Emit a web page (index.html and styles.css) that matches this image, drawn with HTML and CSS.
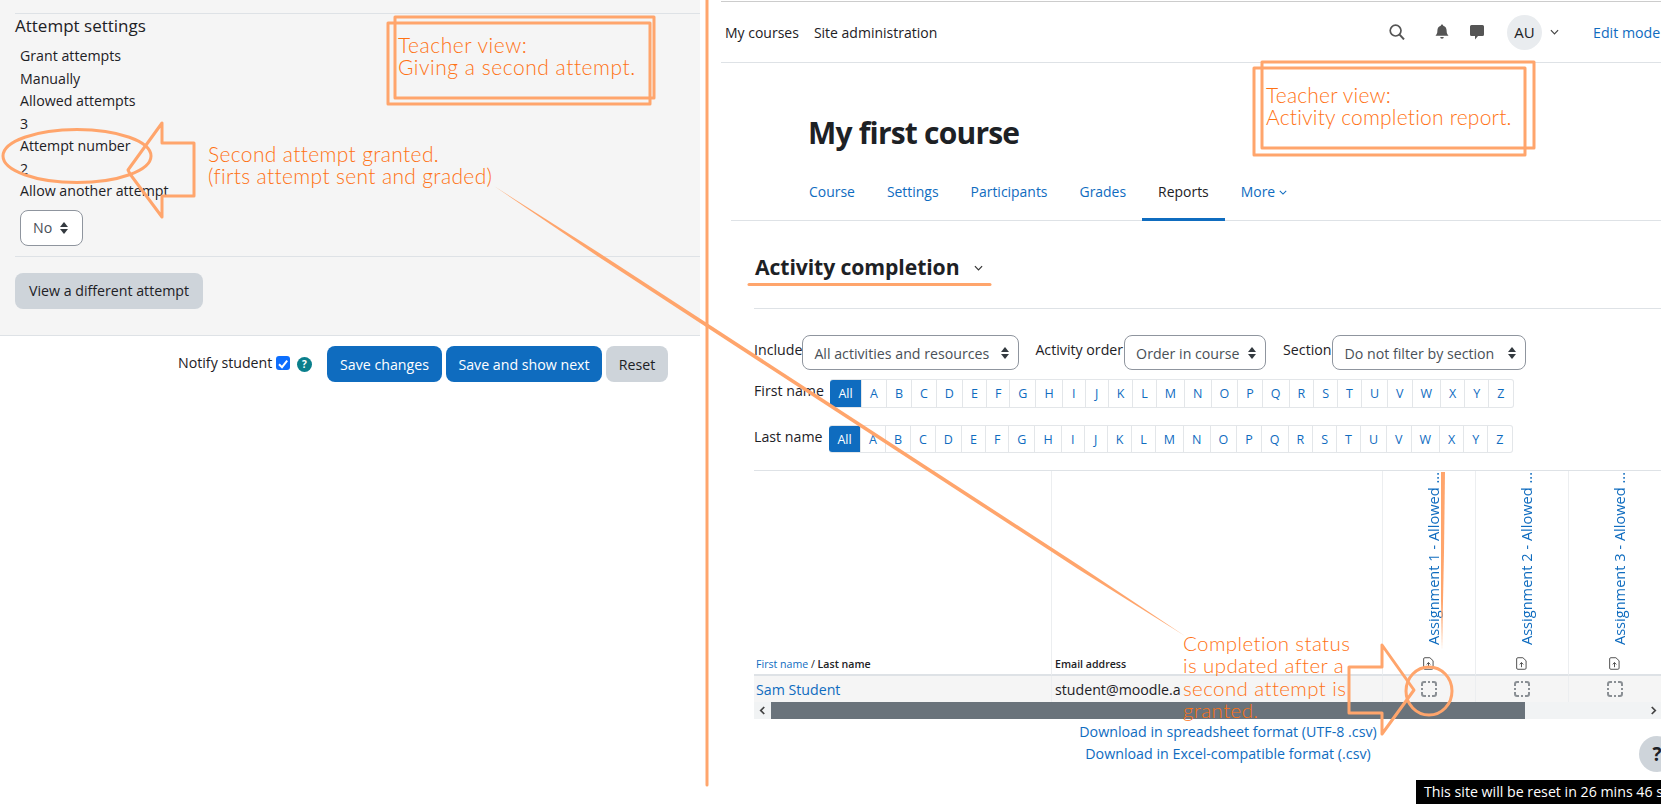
FILE: index.html
```html
<!DOCTYPE html>
<html lang="en">
<head>
<meta charset="utf-8">
<title>Attempt settings and activity completion</title>
<link rel="stylesheet" href="styles.css">
</head>
<body>
<main class="page">
  <section class="left">
    <div class="panel">
      <h3 class="panel-title">Attempt settings</h3>
      <dl class="facts">
        <dt>Grant attempts</dt><dd>Manually</dd>
        <dt>Allowed attempts</dt><dd>3</dd>
        <dt>Attempt number</dt><dd>2</dd>
        <dt>Allow another attempt</dt>
      </dl>
      <div class="select select-no">No<span class="caret"></span></div>
      <div class="panel-foot"><span class="btn btn-grey btn-view">View a different attempt</span></div>
    </div>
    <div class="actions">
      <span class="notify">Notify student</span>
      <span class="check"><svg viewBox="0 0 14 14" width="14" height="14"><path d="M3 7.2 6 10.2 11.2 3.6" fill="none" stroke="#fff" stroke-width="2"/></svg></span>
      <span class="help-dot">?</span>
      <span class="btn btn-blue btn-save">Save changes</span>
      <span class="btn btn-blue btn-next">Save and show next</span>
      <span class="btn btn-grey btn-reset">Reset</span>
    </div>
  </section>

  <section class="right">
    <header class="navbar">
      <nav class="nav-main"><span>My courses</span><span>Site administration</span></nav>
      <div class="nav-tools">
        <svg class="ico-search" viewBox="0 0 16 16" width="16" height="16"><circle cx="6.6" cy="6.6" r="5.4" fill="none" stroke="#555" stroke-width="1.7"/><path d="M10.6 10.6 15 15.4" stroke="#555" stroke-width="2"/></svg>
        <svg class="ico-bell" viewBox="0 0 16 16" width="16" height="16"><path d="M8 0.5a1.2 1.2 0 0 1 1.2 1.3C11.6 2.4 12.6 4.3 12.6 6.6c0 3 .9 4 1.9 5.2H1.5c1-1.2 1.9-2.2 1.9-5.2 0-2.3 1-4.2 3.4-4.8A1.2 1.2 0 0 1 8 .5Z M6.2 13h3.6a1.8 1.8 0 0 1-3.6 0Z" fill="#555"/></svg>
        <svg class="ico-msg" viewBox="0 0 16 16" width="16" height="16"><path d="M2.5 1h11A1.5 1.5 0 0 1 15 2.5v8a1.5 1.5 0 0 1-1.5 1.5H9l-3 3.5V12H2.5A1.5 1.5 0 0 1 1 10.5v-8A1.5 1.5 0 0 1 2.5 1Z" fill="#555"/></svg>
        <span class="avatar">AU</span>
        <svg class="chev chev-user" viewBox="0 0 10 6" width="9" height="6"><path d="M1 1 5 5 9 1" fill="none" stroke="#444" stroke-width="1.3"/></svg>
        <a class="edit-mode">Edit mode</a>
      </div>
    </header>

    <div class="course-head"><h1>My first course</h1></div>

    <nav class="tabs">
      <a>Course</a><a>Settings</a><a>Participants</a><a>Grades</a><a class="active">Reports</a>
      <a class="more">More <svg class="chev" viewBox="0 0 10 6" width="8" height="5"><path d="M1 1 5 5 9 1" fill="none" stroke="#0f6cbf" stroke-width="1.3"/></svg></a>
    </nav>

    <div class="report">
      <div class="report-title">
        <h2>Activity completion</h2>
        <svg class="chev" viewBox="0 0 10 6" width="9" height="6"><path d="M1 1 5 5 9 1" fill="none" stroke="#333" stroke-width="1.3"/></svg>
      </div>

      <div class="filters">
        <span class="flabel">Include</span>
        <div class="select select-a">All activities and resources<span class="caret"></span></div>
        <span class="flabel flabel-b">Activity order</span>
        <div class="select select-b">Order in course<span class="caret"></span></div>
        <span class="flabel flabel-c">Section</span>
        <div class="select select-c">Do not filter by section<span class="caret"></span></div>
      </div>

      <div class="initials init-first">
        <span class="ilabel">First name</span>
        <div class="pager">
          <a class="on">All</a><a>A</a><a>B</a><a>C</a><a>D</a><a>E</a><a>F</a><a>G</a><a>H</a><a>I</a><a>J</a><a>K</a><a>L</a><a>M</a><a>N</a><a>O</a><a>P</a><a>Q</a><a>R</a><a>S</a><a>T</a><a>U</a><a>V</a><a>W</a><a>X</a><a>Y</a><a>Z</a>
        </div>
      </div>
      <div class="initials init-last">
        <span class="ilabel">Last name</span>
        <div class="pager">
          <a class="on">All</a><a>A</a><a>B</a><a>C</a><a>D</a><a>E</a><a>F</a><a>G</a><a>H</a><a>I</a><a>J</a><a>K</a><a>L</a><a>M</a><a>N</a><a>O</a><a>P</a><a>Q</a><a>R</a><a>S</a><a>T</a><a>U</a><a>V</a><a>W</a><a>X</a><a>Y</a><a>Z</a>
        </div>
      </div>

      <div class="grid">
        <div class="cell head name"><span><a>First name</a> / <b>Last name</b></span></div>
        <div class="cell head email"><b>Email address</b></div>
        <div class="cell head act"><a class="vtext">Assignment 1 - Allowed ...</a><svg class="doc" viewBox="0 0 12 14" width="11" height="13"><path d="M2 .7h5.5L11 4v8a1.3 1.3 0 0 1-1.3 1.3H2A1.3 1.3 0 0 1 .7 12V2A1.3 1.3 0 0 1 2 .7Z M6 11V6M4 8l2-2 2 2" fill="none" stroke="#444" stroke-width="1"/></svg></div>
        <div class="cell head act"><a class="vtext">Assignment 2 - Allowed ...</a><svg class="doc" viewBox="0 0 12 14" width="11" height="13"><path d="M2 .7h5.5L11 4v8a1.3 1.3 0 0 1-1.3 1.3H2A1.3 1.3 0 0 1 .7 12V2A1.3 1.3 0 0 1 2 .7Z M6 11V6M4 8l2-2 2 2" fill="none" stroke="#444" stroke-width="1"/></svg></div>
        <div class="cell head act"><a class="vtext">Assignment 3 - Allowed ...</a><svg class="doc" viewBox="0 0 12 14" width="11" height="13"><path d="M2 .7h5.5L11 4v8a1.3 1.3 0 0 1-1.3 1.3H2A1.3 1.3 0 0 1 .7 12V2A1.3 1.3 0 0 1 2 .7Z M6 11V6M4 8l2-2 2 2" fill="none" stroke="#444" stroke-width="1"/></svg></div>
        <div class="cell body name"><a>Sam Student</a></div>
        <div class="cell body email">student@moodle.a</div>
        <div class="cell body act"><svg class="todo" viewBox="0 0 16 16" width="16" height="16"><path d="M1 5V3a2 2 0 0 1 2-2h2M11 1h2a2 2 0 0 1 2 2v2M15 11v2a2 2 0 0 1-2 2h-2M5 15H3a2 2 0 0 1-2-2v-2M7 1h2M7 15h2M1 7v2M15 7v2" fill="none" stroke="#8a8f94" stroke-width="2"/></svg></div>
        <div class="cell body act"><svg class="todo" viewBox="0 0 16 16" width="16" height="16"><path d="M1 5V3a2 2 0 0 1 2-2h2M11 1h2a2 2 0 0 1 2 2v2M15 11v2a2 2 0 0 1-2 2h-2M5 15H3a2 2 0 0 1-2-2v-2M7 1h2M7 15h2M1 7v2M15 7v2" fill="none" stroke="#8a8f94" stroke-width="2"/></svg></div>
        <div class="cell body act"><svg class="todo" viewBox="0 0 16 16" width="16" height="16"><path d="M1 5V3a2 2 0 0 1 2-2h2M11 1h2a2 2 0 0 1 2 2v2M15 11v2a2 2 0 0 1-2 2h-2M5 15H3a2 2 0 0 1-2-2v-2M7 1h2M7 15h2M1 7v2M15 7v2" fill="none" stroke="#8a8f94" stroke-width="2"/></svg></div>
      </div>
      <div class="scrollbar">
        <svg viewBox="0 0 8 10" width="7" height="9"><path d="M6 1 2 5l4 4" fill="none" stroke="#444" stroke-width="2"/></svg>
        <span class="thumb"></span>
        <svg class="sb-right" viewBox="0 0 8 10" width="7" height="9"><path d="M2 1l4 4-4 4" fill="none" stroke="#444" stroke-width="2"/></svg>
      </div>
      <div class="downloads">
        <a>Download in spreadsheet format (UTF-8 .csv)</a>
        <a>Download in Excel-compatible format (.csv)</a>
      </div>
    </div>
  </section>

  <span class="help-float">?</span>
  <div class="reset-bar">This site will be reset in 26 mins 46 s</div>

  <svg class="marks" viewBox="0 0 1661 804" width="1661" height="804" aria-hidden="true">
    <g fill="none" stroke="#ffa56c" stroke-width="3" stroke-linejoin="round" stroke-linecap="round">
      <path d="M707 0V785"/>
      <rect x="388" y="23" width="262" height="81"/>
      <rect x="395" y="17" width="259" height="81"/>
      <rect x="1254" y="68" width="271" height="87"/>
      <rect x="1262" y="62" width="272" height="86"/>
      <ellipse cx="77" cy="156" rx="74" ry="26.5"/>
      <path d="M162 123V143H194V196H162V217L130 174 128 170Z"/>
      <path d="M749 284.5H990"/>
      <path d="M1382 645V667H1349V713H1382V734L1414 690Z"/>
      <ellipse cx="1429" cy="691" rx="23" ry="24"/>
    </g>
    <path d="M494 186 600 253.5 1080 566 1185 636 1078 569 598 256.5Z" fill="#ffa56c"/>
    <path d="M1441 472h4l-1 80-2 98-1-50Z" fill="#ffa56c"/>
  </svg>

  <div class="note note-a">Teacher view:<br>Giving a second attempt.</div>
  <div class="note note-b">Second attempt granted.<br>(firts attempt sent and graded)</div>
  <div class="note note-c">Teacher view:<br>Activity completion report.</div>
  <div class="note note-d">Completion status<br>is updated after a<br>second attempt is<br>granted.</div>
</main>
</body>
</html>
```
FILE: styles.css
```css
* { box-sizing: border-box; }
html, body { margin: 0; padding: 0; }
body { width: 1661px; height: 804px; overflow: hidden; background: #fff; color: #1d2125; font-family: "Open Sans", "Liberation Sans", sans-serif; font-size: 14.2px; }
a { color: #0f6cbf; text-decoration: none; }
h1, h2, h3, dl, dd, dt { margin: 0; padding: 0; font-weight: normal; }

.page { position: relative; display: flex; width: 1661px; height: 804px; }

/* left column */
.left { width: 700px; flex: none; }
.panel { height: 336px; padding: 13px 0 0 15px; background: #f5f5f5; border-bottom: 1px solid #dee2e6; }
.panel-title { border-top: 1px solid #dee2e6; height: 27px; font-size: 17px; line-height: 23px; }
.facts { padding: 5px 0 0 5px; }
.facts dt, .facts dd { height: 22.5px; line-height: 22.5px; }
.select { display: flex; align-items: center; height: 36px; padding-left: 11px; background: #fff; border: 1px solid #8f959e; border-radius: 8px; color: #495057; }
.select-no { width: 63px; margin: 7px 0 0 5px; padding-left: 12px; }
.caret { position: relative; width: 9px; height: 12px; margin-left: 8px; flex: none; }
.caret::before, .caret::after { content: ""; position: absolute; left: 0; border-left: 4.5px solid transparent; border-right: 4.5px solid transparent; }
.caret::before { top: 0; border-bottom: 5px solid #343a40; }
.caret::after { bottom: 0; border-top: 5px solid #343a40; }
.panel-foot { margin-top: 10px; padding-top: 16px; border-top: 1px solid #dee2e6; }
.btn { display: inline-flex; align-items: center; justify-content: center; height: 36px; border-radius: 8px; }
.btn-grey { background: #ced4da; color: #1d2125; }
.btn-blue { background: #0f6cbf; color: #fff; }
.btn-view { width: 188px; }
.actions { display: flex; align-items: center; height: 36px; margin-top: 10px; padding-left: 178px; }
.notify { width: 98px; position: relative; top: -2px; }
.check { display: block; width: 14px; height: 14px; background: #0d6efd; border-radius: 3px; position: relative; top: -1px; }
.help-dot { display: block; width: 15px; height: 15px; margin: 1px 15px 0 7px; border-radius: 50%; background: #0a7f8c; color: #fff; font-size: 10px; font-weight: 700; line-height: 15px; text-align: center; }
.btn-save { width: 115px; margin-right: 4px; }
.btn-next { width: 156px; margin-right: 4px; }
.btn-reset { width: 62px; }

/* right column */
.right { width: 949px; margin-left: 12px; flex: none; overflow: hidden; }
.navbar { display: flex; align-items: center; justify-content: space-between; height: 62px; margin-top: 1px; padding-left: 13px; border-top: 1px solid #ccc; border-bottom: 1px solid #dee2e6; margin-left: 9px; }
.nav-main { display: flex; gap: 15px; position: relative; left: -9px; font-size: 14px; }
.nav-main span { color: #1d2125; }
.nav-tools { display: flex; align-items: center; width: 272px; flex: none; }
.ico-bell { margin-left: 29px; }
.ico-msg { margin-left: 19px; }
.avatar { display: flex; align-items: center; justify-content: center; width: 35px; height: 35px; margin-left: 22px; border-radius: 50%; background: #e9ecef; color: #1d2125; font-size: 15px; }
.chev-user { margin-left: 8px; }
.edit-mode { margin-left: 34px; white-space: nowrap; }

.course-head { padding: 49px 0 0 96px; height: 111px; }
.course-head h1 { font-size: 30px; line-height: 42px; font-weight: 700; letter-spacing: -.8px; white-space: nowrap; }

.tabs { display: flex; height: 47px; margin-left: 19px; padding-left: 62px; border-bottom: 1px solid #dee2e6; font-size: 13.95px; }
.tabs a { display: block; padding: 0 16px; height: 47px; line-height: 36px; position: relative; }
.tabs a.active { color: #1d2125; border-bottom: 3px solid #0f6cbf; }
.tabs .chev { vertical-align: 2px; }

.report { padding-left: 42px; }
.report-title { display: flex; align-items: center; gap: 15px; height: 88px; padding: 0 0 0 1px; border-bottom: 1px solid #dee2e6; }
.report-title h2 { font-size: 21.2px; font-weight: 700; position: relative; top: 2px; white-space: nowrap; letter-spacing: -.1px; }
.report-title .chev { position: relative; top: 3px; }

.filters { display: flex; align-items: center; height: 35px; margin-top: 26px; }
.filters .select { height: 35px; padding-top: 1px; }
.flabel { position: relative; top: -3px; white-space: nowrap; }
.select-a { width: 217px; }
.flabel-b { margin-left: 16px; }
.select-b { width: 142px; margin-left: 1px; }
.flabel-c { margin-left: 17px; }
.filters .select-c { width: 194px; padding-left: 12px; }
.select .caret { margin-left: auto; margin-right: 8px; }
.select-no .caret { margin-left: 8px; }

.initials { display: flex; align-items: flex-start; }
.init-first { margin-top: 9px; }
.init-last { margin-top: 17px; margin-left: -1px; }
.ilabel { width: 76px; height: 24px; line-height: 24px; flex: none; }
.init-last .ilabel { padding-left: 1px; }
.pager { display: flex; border: 1px solid #e3e6e9; border-left: 0; border-radius: 3px; height: 29px; font-size: 12.5px; }
.init-last .pager { height: 28px; }
.pager a { display: flex; align-items: center; justify-content: center; height: 100%; padding: 0 8px; min-width: 23px; border-right: 1px solid #e3e6e9; }
.pager a:last-child { border-right: 0; }
.pager a.on { background: #0f6cbf; color: #fff; width: 32px; border-radius: 3px 0 0 3px; }

.grid { display: grid; grid-template-columns: 298px 331px 92.5px 93px 93px; margin-top: 17px; border-top: 1px solid #dee2e6; }
.cell { border-right: 1px solid #eceef0; }
.head { height: 205px; border-bottom: 2px solid #dee2e6; }
.head.name, .head.email { display: flex; align-items: flex-end; padding: 0 0 3px 2px; font-size: 10.6px; }
.head.email { padding-left: 3px; }
.head.act { display: flex; flex-direction: column; align-items: center; justify-content: flex-end; padding-bottom: 4px; }
.head b { font-weight: 600; }
.vtext { writing-mode: vertical-rl; transform: rotate(180deg); white-space: nowrap; font-size: 14.6px; margin: 0 0 12px 8px; line-height: 18px; }
.doc { display: block; }
.body { display: flex; align-items: center; height: 26px; background: #f5f5f5; font-size: 14.2px; padding-left: 2px; white-space: nowrap; overflow: hidden; }
.body.email { padding-left: 3px; }
.body.act { justify-content: center; padding-left: 0; overflow: visible; }
.todo { display: block; }

.scrollbar { display: flex; align-items: center; height: 17px; background: #f1f3f4; padding-left: 5px; position: relative; }
.thumb { width: 754px; height: 17px; margin-left: 5px; background: #6a737b; }
.sb-right { position: absolute; left: 896px; top: 4px; }

.downloads { display: flex; flex-direction: column; align-items: center; width: 948px; margin-top: 2px; }
.downloads a { height: 22px; line-height: 22px; white-space: nowrap; font-size: 14.25px; }

.help-float { position: absolute; left: 1639px; top: 736px; width: 36px; height: 36px; border-radius: 50%; background: #ced4da; color: #1d2125; font-weight: 700; font-size: 19px; line-height: 36px; text-align: center; }
.reset-bar { position: absolute; left: 1416px; top: 780px; width: 245px; height: 24px; padding-left: 8px; background: #000; color: #fff; line-height: 24px; white-space: nowrap; overflow: hidden; }

/* annotations */
.marks { position: absolute; left: 0; top: 0; pointer-events: none; filter: blur(.4px); }
.note { position: absolute; color: #ff7214; font-family: "Lato", "Liberation Sans", sans-serif; font-weight: 300; white-space: nowrap; font-size: 21px; line-height: 22.3px; letter-spacing: .53px; }
.note-a { left: 398px; top: 34px; }
.note-b { left: 208px; top: 143px; letter-spacing: .35px; }
.note-c { left: 1266px; top: 84px; letter-spacing: .2px; }
.note-d { left: 1183px; top: 632px; font-size: 20.5px; letter-spacing: .4px; }
```
